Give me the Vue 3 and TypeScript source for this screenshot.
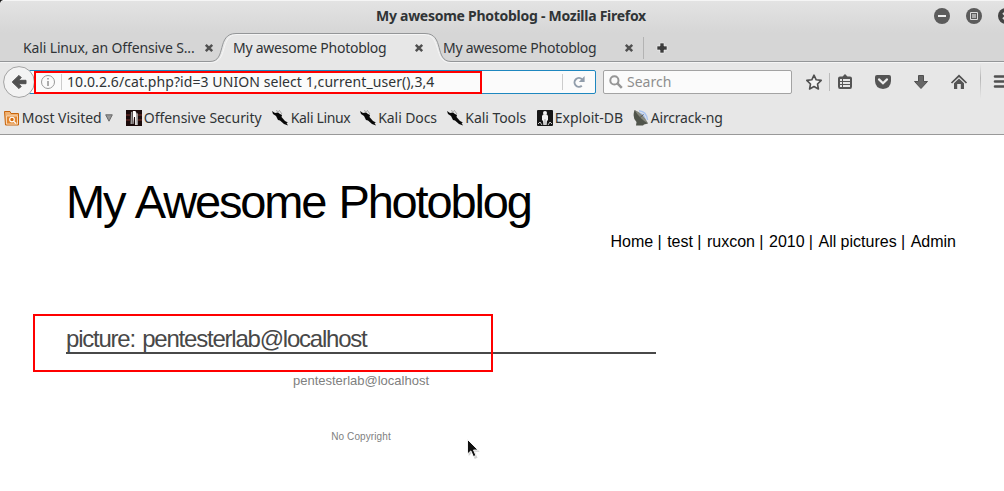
<script setup lang="ts">
interface Bookmark {
  label: string
  icon: 'folder' | 'offsec' | 'dragon' | 'exploit' | 'dish'
  width: number
  spacing: number
  menu?: boolean
}

const tabs = [
  { title: 'Kali Linux, an Offensive S...', cls: 'first' },
  { title: 'My awesome Photoblog', cls: '' },
  { title: 'My awesome Photoblog', cls: '' },
]

const bookmarks: Bookmark[] = [
  { label: 'Most Visited', icon: 'folder', width: 122, spacing: -0.05, menu: true },
  { label: 'Offensive Security', icon: 'offsec', width: 146, spacing: -0.05 },
  { label: 'Kali Linux', icon: 'dragon', width: 87.5, spacing: -0.35 },
  { label: 'Kali Docs', icon: 'dragon', width: 87, spacing: -0.1 },
  { label: 'Kali Tools', icon: 'dragon', width: 90.5, spacing: -0.05 },
  { label: 'Exploit-DB', icon: 'exploit', width: 96, spacing: 0 },
  { label: 'Aircrack-ng', icon: 'dish', width: 100, spacing: -0.2 },
]

const links = ['Home |', 'test |', 'ruxcon |', '2010 |', 'All pictures |', 'Admin']
</script>

<template>
  <div class="window">
    <header class="chrome">
      <svg class="corner" width="4" height="4"><path d="M0 0H3L1 1L0 3Z" fill="#111" /></svg>
      <div class="titlebar">
        <span class="title">My awesome Photoblog - Mozilla Firefox</span>
        <svg class="controls" width="72" height="16" viewBox="0 0 72 16">
          <circle cx="8" cy="8" r="8" fill="#5b5b5b" />
          <path d="M4 8H12" stroke="#eee" stroke-width="2" />
          <circle cx="40" cy="8" r="8" fill="#5b5b5b" />
          <path d="M36.500 4.500H43.500V11.500H36.500Z" fill="none" stroke="#ddd" />
          <path d="M38 6H42V10H38Z" fill="#aaa" />
          <circle cx="72" cy="8" r="8" fill="#444" />
          <path d="M69 5L72 8L69 11" fill="none" stroke="#ddd" stroke-width="2" />
        </svg>
      </div>

      <div class="tabstrip">
        <svg class="tabshape" width="1004" height="30" viewBox="0 0 1004 30">
          <path d="M0 28.500H210C227 28.500 216 .5 236 .5H425C445 .5 434 28.500 451 28.500H1004V30H0Z" fill="#e7e7e7" />
          <path d="M0 29.500H211C229 29.500 219 1.500 237 1.500H424C442 1.500 433 29.500 450 29.500H1004" fill="none" stroke="#f5f5f5" />
          <path d="M0 28.500H210C227 28.500 216 .5 236 .5H425C445 .5 434 28.500 451 28.500H1004" fill="none" stroke="#949698" />
        </svg>
        <div v-for="(tab, i) in tabs" :key="i" class="tab">
          <span :class="['tabname', tab.cls]">{{ tab.title }}</span>
          <svg width="10" height="10" viewBox="0 0 10 10"><path d="M1.800 1.800L8.200 8.200M8.200 1.800L1.800 8.200" stroke="#505050" stroke-width="2.500" /></svg>
        </div>
        <div class="newtab">
          <svg width="12" height="12" viewBox="0 0 12 12"><path d="M4 1H8V4H11V8H8V11H4V8H1V4H4Z" fill="#3d3d3d" stroke="#f3f3f3" stroke-width=".6" /></svg>
        </div>
      </div>

      <div class="toolbar">
        <svg class="back" width="32" height="32" viewBox="0 0 32 32">
          <circle cx="16" cy="16" r="15.400" fill="#f3f3f3" stroke="#a3a3a3" />
          <path d="M9.200 16L16 9.400L18.200 11.600L15.500 14.300H23V17.700H15.500L18.200 20.400L16 22.600Z" fill="#505050" stroke="#505050" stroke-linejoin="round" />
        </svg>
        <div class="url">
          <svg class="info" width="16" height="16" viewBox="0 0 16 16">
            <circle cx="8" cy="8" r="6.500" fill="none" stroke="#999" />
            <path d="M8 7V12M8 4V5.600" stroke="#999" stroke-width="1.600" />
          </svg>
          <i class="vline"></i>
          <span class="address">10.0.2.6/cat.php?id=3 UNION select 1,current_user(),3,4</span>
          <i class="vline reloadline"></i>
          <svg class="reload" width="14" height="14" viewBox="0 0 14 14">
            <path d="M9.800 10.800A4.400 4.400 0 1 1 10 4.300" fill="none" stroke="#919dab" stroke-width="2" />
            <path d="M12.600 1V7H6.800Z" fill="#919dab" />
          </svg>
        </div>
        <div class="search">
          <svg width="14" height="14" viewBox="0 0 14 14"><circle cx="5.400" cy="5.400" r="4.100" fill="none" stroke="#969696" stroke-width="2" /><path d="M8.400 8.400L12.800 12.800" stroke="#969696" stroke-width="2.500" /></svg>
          <span>Search</span>
        </div>
        <svg class="actions" width="204" height="38" viewBox="800 63 204 38">
          <path d="M814 75.200L816.200 79.800L821.200 80.400L817.500 84L818.400 89L814 86.500L809.600 89L810.500 84L806.800 80.400L811.800 79.800Z" fill="#f3f3f3" stroke="#505050" stroke-width="1.600" stroke-linejoin="round" />
          <path d="M829.500 73V91" stroke="#bbb" />
          <path d="M840 76.500H842.500L845 74L847.500 76.500H850Q852 76.500 852 78.500V86.500Q852 89 850 89H840Q838 89 838 86.500V78.500Q838 76.500 840 76.500Z" fill="#545454" />
          <path d="M840 79H842V81H840ZM843 79H850V81H843ZM840 82H842V84H840ZM843 82H850V84H843ZM840 85H842V87H840ZM843 85H850V87H843Z" fill="#e4e4e4" />
          <path d="M877 75H889Q891 75 891 77V81Q890.600 88.600 883 89Q875.400 88.600 875 81V77Q875 75 877 75Z" fill="#555" />
          <path d="M879 79.400L883 83.200L887 79.400" fill="none" stroke="#eee" stroke-width="2.200" stroke-linecap="round" />
          <path d="M918.500 75.500H923.500V81.500H927.500L921 88.500L914.500 81.500H918.500Z" fill="#666" stroke="#505050" stroke-linejoin="round" />
          <path d="M951.500 83L959 75.800L966.500 83" fill="none" stroke="#505050" stroke-width="1.700" />
          <path d="M954 83.200L959 78.400L964 83.200V89H960.800V84H957.200V89H954Z" fill="#555" />
          <path d="M980 64H981V99H980Z" fill="url(#fade)" />
          <path d="M995 76.500H1004M995 81.500H1004M995 86.500H1004" stroke="#505050" stroke-width="2.600" stroke-linecap="round" />
          <defs><linearGradient id="fade" gradientUnits="userSpaceOnUse" x1="0" x2="0" y1="64" y2="99"><stop offset="0" stop-color="#bbb" stop-opacity="0" /><stop offset=".4" stop-color="#b5b5b5" /><stop offset="1" stop-color="#bbb" stop-opacity="0" /></linearGradient></defs>
        </svg>
        <div class="mark mark-url"></div>
      </div>

      <nav class="bookmarks">
        <div v-for="b in bookmarks" :key="b.label" class="bookmark" :style="{ width: b.width + 'px' }">
          <svg v-if="b.icon === 'folder'" width="16" height="16" viewBox="0 0 16 16">
            <path d="M.5 1.500H6L7 3.500H14.500V15H1.500Z" fill="#f0b273" stroke="#c8650c" />
            <path d="M2.500 6H13.500V14H2.500Z" fill="#e2862f" stroke="#fae3ca" stroke-width=".8" />
            <circle cx="8" cy="9.600" r="2.300" fill="#d46b0c" stroke="#fff" stroke-width="1.100" /><path d="M9.800 11.300L12 13.500" stroke="#fff" stroke-width="1.200" />
          </svg>
          <svg v-else-if="b.icon === 'offsec'" width="16" height="16" viewBox="0 0 16 16">
            <path d="M0 0H16V16H0Z" fill="#1b0b0b" /><path d="M0 4H4V6H0ZM12 4H16V6H12ZM0 9H4V11H0ZM12 9H16V11H12Z" fill="#4a1e1b" />
            <path d="M5 2L6.500 1.500L6 14H4.500ZM10.500 2L12 4V15H11Z" fill="#999" />
            <path d="M7 1H9.500L10.500 4L10.800 15H9.200L9 7H8L7.400 14H6.600Z" fill="#fff" />
          </svg>
          <svg v-else-if="b.icon === 'dragon'" width="17" height="16" viewBox="0 0 17 16">
            <path d="M0 1L3 3L6 2.500L8 4L10 5L9.500 7L13 11L16 12.500L14.500 13L16 15.500L12 14L8 10.500L6 10L4 6L1 4Z" fill="#080808" />
            <path d="M4 .5L7 2M7 0L10 4" stroke="#888" stroke-width=".7" />
          </svg>
          <svg v-else-if="b.icon === 'exploit'" width="16" height="16" viewBox="0 0 16 16">
            <rect width="16" height="16" rx="1" fill="#161616" />
            <circle cx="8" cy="3" r="2" fill="#f5f5f5" /><path d="M6 4.500H10L11 6V10.500H10L9.600 15H6.400L6 10.500H5V6Z" fill="#f2f2f2" />
            <path d="M8 9V15" stroke="#777" stroke-width=".6" />
            <path d="M1 14L3 12L5 15M11 15L13 12L15 14" fill="none" stroke="#c8c8c8" />
          </svg>
          <svg v-else width="16" height="16" viewBox="0 0 16 16">
            <path d="M6 .8Q13.500 1.500 14.500 10M6 3Q11 4 12 9" fill="none" stroke="#a9c4f0" stroke-width="1.500" />
            <path d="M1.500 0Q-1 8 3.500 12L3 15.500H10L11 14.500L15 13.500Q10 5 1.500 0Z" fill="#50544b" />
            <path d="M1.500 0Q10 3 15 13.500Q7 9 1.500 0Z" fill="#85877d" />
            <path d="M7 7.500L10.500 4.500" stroke="#555" />
          </svg>
          <span class="bname" :style="{ letterSpacing: b.spacing + 'px' }">{{ b.label }}</span>
          <svg v-if="b.menu" class="caret" width="8" height="8" viewBox="0 0 8 8"><path d="M.7 .8H7.300L4 7.200Z" fill="#999" stroke="#6a6a6a" /></svg>
        </div>
      </nav>
    </header>

    <main class="page">
      <h1>My Awesome Photoblog</h1>
      <ul class="menu">
        <li v-for="link in links" :key="link">{{ link }}</li>
      </ul>
      <section class="content">
        <h2>picture: pentesterlab@localhost</h2>
        <p class="caption">pentesterlab@localhost</p>
        <p class="copyright">No Copyright</p>
        <div class="mark mark-picture"></div>
      </section>
      <svg class="cursor" width="15" height="22" viewBox="0 0 15 22">
        <path d="M2 2V17L5.400 13.800L8 20L10.800 18.800L8.200 12.800H13Z" fill="#999" opacity=".45" transform="translate(.7 1)" />
        <path d="M1.500 1.500V16L4.900 12.900L7.400 18.600L9.900 17.500L7.500 12H12Z" fill="#111" stroke="#fff" stroke-width=".9" />
      </svg>
    </main>
  </div>
</template>

<style>
body { margin: 0; }
</style>

<style scoped>
.window { width: 1004px; height: 491px; overflow: hidden; background: #fff; position: relative; }
.chrome { height: 135px; box-sizing: border-box; border-bottom: 1px solid #999; background: #e7e7e7; font: 14px/20px "Noto Sans", "Open Sans", sans-serif; color: #303436; }
.corner { position: absolute; left: 0; top: 0; z-index: 2; }
.titlebar { height: 33px; background: linear-gradient(#f5f5f5 0, #f5f5f5 1px, #e3e3e3 1px, #d6d6d6 100%); position: relative; display: flex; justify-content: center; }
.title { width: 272px; margin-left: 20px; padding-top: 6px; font-weight: 700; letter-spacing: -.27px; white-space: nowrap; }
.controls { position: absolute; right: -2px; top: 8px; width: 72px; }
.tabstrip { height: 30px; background: #d6d6d6; position: relative; display: flex; padding-left: 23px; }
.tabshape { position: absolute; left: 0; top: 0; }
.tab { position: relative; width: 210px; display: flex; align-items: center; height: 29px; }
.tabname { width: 181px; white-space: nowrap; letter-spacing: -.25px; }
.tabname.first { letter-spacing: -.14px; }
.newtab { position: relative; height: 22px; margin: 4px 0 0 -10px; border-left: 1px solid #b3b3b3; padding: 0 0 0 12px; display: flex; align-items: center; }
.toolbar { height: 38px; position: relative; display: flex; align-items: center; }
.back { margin-left: 3px; position: relative; z-index: 1; }
.url { width: 567px; height: 24px; margin-left: -6px; box-sizing: border-box; background: #fbfbfb; border: 1px solid #1e87bf; border-radius: 0 2px 2px 0; display: flex; align-items: center; }
.info { margin-left: 10px; }
.vline { width: 1px; height: 16px; background: #ccc; margin-left: 5px; }
.address { margin-left: 5px; width: 495px; white-space: nowrap; letter-spacing: .075px; }
.reloadline { margin-left: 0; }
.reload { margin-left: 9px; }
.search { width: 189px; height: 24px; box-sizing: border-box; margin-left: 7px; border: 1px solid #a3a3a3; border-radius: 2px; background: #fbfbfb; display: flex; align-items: center; padding-left: 5px; gap: 4px; color: #8e8e8e; }
.actions { margin-left: 8px; }
.mark { position: absolute; box-sizing: border-box; border: 2px solid #f00; z-index: 2; }
.mark-url { left: 34px; top: 8px; width: 448px; height: 23px; }
.bookmarks { height: 33px; display: flex; align-items: center; padding-left: 4px; white-space: nowrap; }
.bookmark { display: flex; align-items: center; flex: none; }
.bname { margin-left: 1.800px; }
.caret { margin-left: 3px; }
.page { height: 356px; font-family: "Liberation Sans", Arial, sans-serif; position: relative; }
h1 { margin: 0 0 0 66px; padding: 39px 0 1px; font-weight: 400; font-size: 47px; line-height: 55px; letter-spacing: -2.150px; word-spacing: 2.200px; color: #000; white-space: nowrap; }
.menu { list-style: none; display: flex; margin: 3px 0 0; padding: 0 48px 0 0; justify-content: flex-end; gap: 5.600px; font-size: 16px; line-height: 18px; color: #000; word-spacing: -.2px; }
.content { width: 590px; margin: 74px 0 0 66px; text-align: center; color: #808080; position: relative; }
h2 { margin: 0; text-align: left; font-size: 24px; line-height: 27px; font-weight: 400; letter-spacing: -1.220px; word-spacing: 1.800px; color: #484848; border-bottom: 2px solid #484848; }
.caption { margin: 19px 0 0; font-size: 13px; line-height: 15px; }
.copyright { margin: 43px 0 0; font-size: 10px; line-height: 12px; letter-spacing: .1px; }
.mark-picture { left: -33px; top: -11px; width: 460px; height: 58px; }
.cursor { position: absolute; left: 466px; top: 303px; }
</style>
